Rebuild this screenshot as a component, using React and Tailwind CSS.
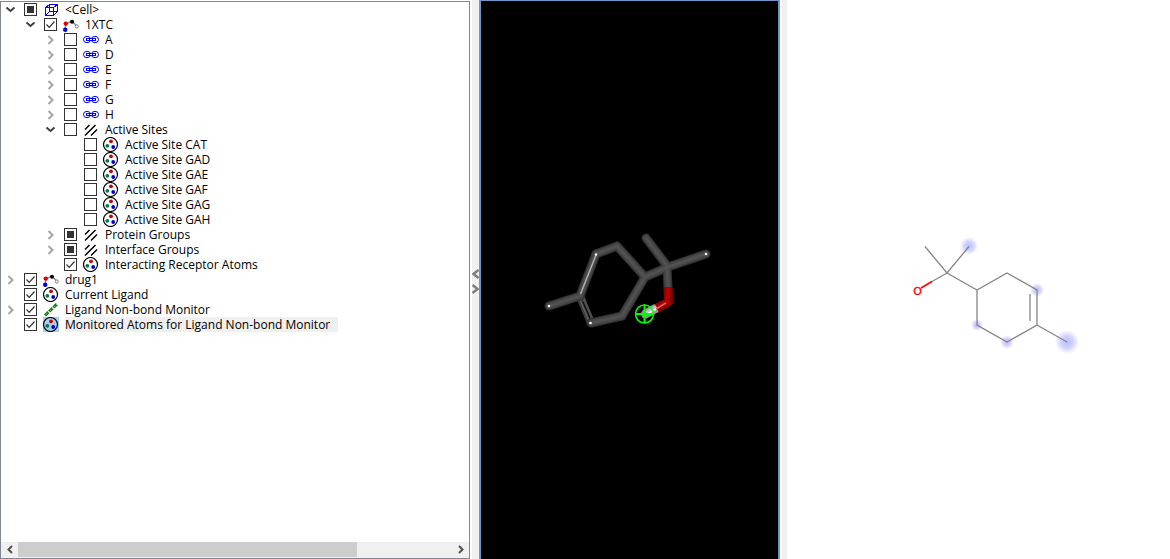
import { useEffect, useRef } from "react";

function CellIcon() {
  return (
    <g fill="none" stroke="#0000ff" shapeRendering="crispEdges">
      <path d="M2.5 5.5h8v8h-8zM6.5 2.5h8v7h-8z" />
      <path d="M2.5 5.5l4-3M10.5 5.5l4-3M2.5 13.5l4-4M10.5 13.5l4-4" />
    </g>
  );
}

function MoleculeIcon() {
  return (
    <g>
      <path d="M2 12.5L3 7l6-3 5 5.500" fill="none" stroke="#808080" strokeWidth="1.200" />
      <circle cx="2.800" cy="6.600" r="2.200" fill="#d80000" />
      <circle cx="9" cy="4.700" r="2" fill="#000" />
      <circle cx="2.200" cy="12.700" r="2.200" fill="#0000e0" />
      <circle cx="13.800" cy="9.500" r="1.600" fill="#fff" stroke="#808080" />
    </g>
  );
}

function ChainIcon() {
  return (
    <g fill="none" stroke="#0000ff">
      <ellipse cx="4" cy="7.500" rx="3.500" ry="3.200" />
      <ellipse cx="12" cy="7.500" rx="3.500" ry="3.200" />
      <path d="M3.500 6.500h9v2h-9z" fill="#fff" shapeRendering="crispEdges" />
      <path d="M6.500 6v3M9.500 6v3" shapeRendering="crispEdges" />
    </g>
  );
}

function GroupIcon() {
  return (
    <path
      d="M2 7.500L6.500 3M2 13.500L12.500 3M8 13.500L14 7.500"
      fill="none"
      stroke="#000"
      strokeWidth="1.500"
    />
  );
}

function AtomsIcon() {
  return (
    <g>
      <circle cx="7.500" cy="7.500" r="7" fill="none" stroke="#000" strokeWidth="1.200" />
      <circle cx="8" cy="4.300" r="1.900" fill="#c80000" />
      <circle cx="4.300" cy="8.800" r="1.900" fill="#007a4a" />
      <circle cx="10.200" cy="10" r="1.900" fill="#0000c8" />
    </g>
  );
}

function MonitorIcon() {
  return (
    <g>
      <path d="M2 13.500L14 2" stroke="#157a15" strokeWidth="3" strokeDasharray="4.800 1" />
      <path d="M2.700 12.800L14 2" stroke="#d5f0d5" strokeDasharray="1 1.900" />
    </g>
  );
}

const icons = {
  cell: CellIcon,
  molecule: MoleculeIcon,
  chain: ChainIcon,
  group: GroupIcon,
  atoms: AtomsIcon,
  monitor: MonitorIcon,
};

const site = (label) => ({ depth: 3, state: "off", icon: "atoms", label });
const chain = (label) => ({ depth: 2, arrow: "closed", state: "off", icon: "chain", label });

const rows = [
  { depth: 0, arrow: "open", state: "mixed", icon: "cell", label: "<Cell>" },
  { depth: 1, arrow: "open", state: "on", icon: "molecule", label: "1XTC" },
  chain("A"),
  chain("D"),
  chain("E"),
  chain("F"),
  chain("G"),
  chain("H"),
  { depth: 2, arrow: "open", state: "off", icon: "group", label: "Active Sites" },
  site("Active Site CAT"),
  site("Active Site GAD"),
  site("Active Site GAE"),
  site("Active Site GAF"),
  site("Active Site GAG"),
  site("Active Site GAH"),
  { depth: 2, arrow: "closed", state: "mixed", icon: "group", label: "Protein Groups" },
  { depth: 2, arrow: "closed", state: "mixed", icon: "group", label: "Interface Groups" },
  { depth: 2, state: "on", icon: "atoms", label: "Interacting Receptor Atoms" },
  { depth: 0, arrow: "closed", state: "on", icon: "molecule", label: "drug1" },
  { depth: 0, state: "on", icon: "atoms", label: "Current Ligand" },
  { depth: 0, arrow: "closed", state: "on", icon: "monitor", label: "Ligand Non-bond Monitor" },
  { depth: 0, state: "on", icon: "atoms", label: "Monitored Atoms for Ligand Non-bond Monitor", selected: true },
];

const indents = ["pl-0", "pl-5", "pl-10", "pl-15"];

function Checkbox({ id, state }) {
  const ref = useRef(null);
  useEffect(() => {
    ref.current.indeterminate = state === "mixed";
  }, [state]);
  return (
    <span className="ml-[5px] grid size-[13px] shrink-0">
      <input
        ref={ref}
        id={id}
        type="checkbox"
        defaultChecked={state === "on"}
        className="peer col-start-1 row-start-1 size-[13px] appearance-none border border-[#333333] bg-white"
      />
      <svg viewBox="0 0 13 13" className="pointer-events-none col-start-1 row-start-1 hidden size-[13px] peer-checked:block">
        <path d="M2.500 6.500l2.700 2.800 5.300-5.800" fill="none" stroke="#333" strokeWidth="1.200" />
      </svg>
      <span className="pointer-events-none col-start-1 row-start-1 m-[3px] hidden bg-[#333333] peer-indeterminate:block" />
    </span>
  );
}

function Row({ row, id }) {
  const Icon = icons[row.icon];
  return (
    <li className={`flex h-[15px] items-center ${indents[row.depth]}`}>
      {row.arrow ? (
        <button type="button" aria-label={`Toggle ${row.label}`} className="size-4 shrink-0">
          <svg viewBox="0 0 16 16" className="size-4" fill="none" strokeWidth="2">
            {row.arrow === "open" ? (
              <path d="M3.500 5.500L7.500 9l4-3.500" stroke="#404040" />
            ) : (
              <path d="M5.500 4L9.500 8l-4 4" stroke="#a6a6a6" />
            )}
          </svg>
        </button>
      ) : (
        <span className="w-4 shrink-0" />
      )}
      <Checkbox id={id} state={row.state} />
      <svg
        viewBox="0 0 16 15"
        className={`ml-[6px] h-[15px] w-4 shrink-0 ${row.selected ? "bg-[#a9cdf0]" : ""}`}
      >
        <Icon />
      </svg>
      <label
        htmlFor={id}
        className={`ml-[6px] pr-2 leading-[15px] whitespace-nowrap ${row.selected ? "bg-[#f0f0f0]" : ""}`}
      >
        {row.label}
      </label>
    </li>
  );
}

function TreePanel() {
  return (
    <section className="mt-px flex min-w-0 flex-[468] flex-col border border-[#828790]">
      <ul className="min-h-0 flex-1 overflow-hidden pl-[2px]">
        {rows.map((row, i) => (
          <Row key={row.label} row={row} id={`node-${i}`} />
        ))}
      </ul>
      <div className="flex h-4 shrink-0 bg-[#f0f0f0] pb-px">
        <button type="button" aria-label="Scroll left" className="flex w-[17px] items-center justify-center">
          <svg viewBox="0 0 8 9" className="h-[9px] w-2" fill="none" stroke="#505050" strokeWidth="2">
            <path d="M6 1L2.500 4.500 6 8" />
          </svg>
        </button>
        <div className="flex-1">
          <div className="h-full w-[78%] bg-[#cdcdcd]" />
        </div>
        <button type="button" aria-label="Scroll right" className="flex w-[17px] items-center justify-center">
          <svg viewBox="0 0 8 9" className="h-[9px] w-2" fill="none" stroke="#505050" strokeWidth="2">
            <path d="M2 1l3.500 3.500L2 8" />
          </svg>
        </button>
      </div>
    </section>
  );
}

const sticks = [
  [549, 306, 580, 296],
  [580, 296, 596, 254],
  [596, 254, 617, 246],
  [617, 246, 645, 277],
  [645, 277, 622, 316],
  [622, 316, 591, 323],
  [645, 277, 668, 267],
  [668, 267, 646, 238],
  [668, 267, 706, 254],
  [667, 267, 668, 288],
];

const bands = [
  ["#303030", 9],
  ["#404040", 7],
  ["#4a4a4a", 5],
  ["#525252", 2],
];

function Line({ p, ...rest }) {
  return <line x1={p[0]} y1={p[1]} x2={p[2]} y2={p[3]} {...rest} />;
}

function Viewer3D() {
  return (
    <section className="flex min-w-0 flex-[297] border-x-2 border-t border-[#7096c8] bg-black">
      <svg viewBox="481 1 297 558" className="size-full" role="img" aria-label="3D ligand view">
        <g strokeLinecap="round">
          <path d="M580 296L590.500 322" stroke="#3c3c3c" strokeWidth="8" />
          <path d="M583 297L592 318" stroke="#505050" strokeWidth="2" />
          <path d="M580.500 301L588.500 320" stroke="#606060" strokeWidth="1.500" />
          <path d="M583 302L590 318" stroke="#101010" strokeWidth="1.200" />
          {bands.map(([color, width]) =>
            sticks.map((p, i) => <Line key={`${width}-${i}`} p={p} stroke={color} strokeWidth={width} />)
          )}
        </g>
        <path d="M596 255L580.500 294" stroke="#b0b0b0" strokeWidth="1.500" />
        <g fill="none" strokeLinejoin="round">
          <path d="M668 287L668.500 302L656 308.500" stroke="#8c0000" strokeWidth="9" />
          <path d="M668 287L668 301L656 308" stroke="#b00000" strokeWidth="4" />
          <path d="M656.500 308L647 313" stroke="#989898" strokeWidth="9" />
          <circle cx="645.500" cy="314" r="4.500" fill="#909090" />
          <path d="M656.500 307L646 313" stroke="#c0c0c0" strokeWidth="4" />
          <path d="M656 309L666 303" stroke="#e06060" strokeWidth="1.500" />
          <path d="M656 309L648 313.500" stroke="#fff" strokeWidth="1.500" />
        </g>
        <g fill="#ffffff">
          <circle cx="549" cy="306" r="1.300" />
          <circle cx="590.500" cy="323" r="1.300" />
          <circle cx="706" cy="254" r="1.300" />
          <circle cx="596" cy="254.500" r="1.200" />
        </g>
        <g fill="none" stroke="#00ff00" strokeWidth="2">
          <circle cx="644.500" cy="314" r="9" strokeWidth="1.500" />
          <path d="M635 314h19M644.500 304.500v19" />
        </g>
      </svg>
    </section>
  );
}

const halos = [
  [969, 246, 9],
  [1037, 290, 7],
  [977, 325, 6],
  [1007, 342, 7],
  [1067, 342, 12],
];

function Depiction2D() {
  return (
    <section className="flex min-w-0 flex-[383] bg-white">
      <svg viewBox="787 0 383 559" className="size-full" role="img" aria-label="2D ligand structure">
        <defs>
          <radialGradient id="halo">
            <stop offset="0" stopColor="#bcbcff" />
            <stop offset="0.500" stopColor="#d2d2ff" />
            <stop offset="1" stopColor="#ffffff" />
          </radialGradient>
        </defs>
        {halos.map(([cx, cy, r]) => (
          <circle key={`${cx}-${cy}`} cx={cx} cy={cy} r={r} fill="url(#halo)" />
        ))}
        <path
          d="M925 246.500L947 273L969 246.500M947 273L977 290L1007 273L1037 290L1037 325L1007 342L977 325L977 290M1030 294V321M1037 325L1067 342M947 273L932 281.500"
          fill="none"
          stroke="#858585"
          strokeWidth="1.300"
        />
        <path d="M932 281.500L921 288" stroke="#ff0000" strokeWidth="1.700" />
        <text x="917.500" y="295" textAnchor="middle" fill="#ff0000" stroke="#ff0000" strokeWidth="0.300" className="font-['DejaVu_Sans',sans-serif] text-[11px]">
          O
        </text>
      </svg>
    </section>
  );
}

export default function App() {
  return (
    <main className="flex h-screen overflow-hidden bg-white font-['Open_Sans','Noto_Sans',sans-serif] text-[12px] text-black">
      <TreePanel />
      <div className="ml-[2px] flex w-[7px] shrink-0 flex-col items-center bg-[#f0f0f0] pt-[266px]">
        <button type="button" aria-label="Collapse left" className="h-[15px] w-[7px]">
          <svg viewBox="0 0 7 10" className="h-[10px] w-[7px]" fill="none" stroke="#808080" strokeWidth="2.500">
            <path d="M6.500 1L1.500 5l5 4" />
          </svg>
        </button>
        <button type="button" aria-label="Expand right" className="h-[15px] w-[7px]">
          <svg viewBox="0 0 7 10" className="h-[10px] w-[7px]" fill="none" stroke="#808080" strokeWidth="2.500">
            <path d="M0.500 1l5 4-5 4" />
          </svg>
        </button>
      </div>
      <Viewer3D />
      <div className="ml-[2px] w-[5px] shrink-0 bg-[#f0f0f0]" />
      <Depiction2D />
    </main>
  );
}
